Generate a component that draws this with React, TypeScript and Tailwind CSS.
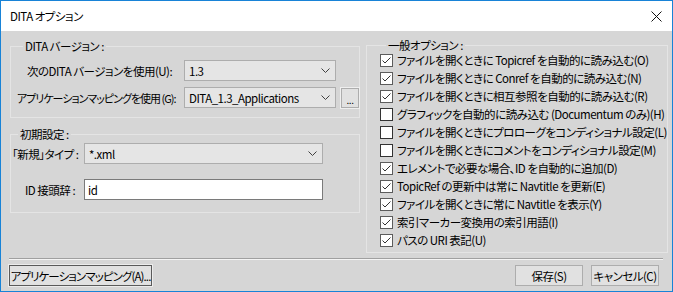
const FONT = "font-['Noto_Sans_CJK_JP','Noto_Sans',sans-serif] [font-feature-settings:'palt']";

const OPTIONS = [
  { label: "ファイルを開くときに Topicref を自動的に読み込む(O)", checked: true },
  { label: "ファイルを開くときに Conref を自動的に読み込む(N)", checked: true },
  { label: "ファイルを開くときに相互参照を自動的に読み込む(R)", checked: true },
  { label: "グラフィックを自動的に読み込む (Documentum のみ)(H)", checked: false },
  { label: "ファイルを開くときにプロローグをコンディショナル設定(L)", checked: false },
  { label: "ファイルを開くときにコメントをコンディショナル設定(M)", checked: false },
  { label: "エレメントで必要な場合、ID を自動的に追加(D)", checked: true },
  { label: "TopicRef の更新中は常に Navtitle を更新(E)", checked: true },
  { label: "ファイルを開くときに常に Navtitle を表示(Y)", checked: true },
  { label: "索引マーカー変換用の索引用語(I)", checked: true },
  { label: "パスの URI 表記(U)", checked: true },
];

function Chevron() {
  return (
    <svg width="9" height="5" viewBox="0 0 9 5" className="shrink-0">
      <polyline points="0.5,0.5 4.5,4.5 8.5,0.5" fill="none" stroke="#404040" strokeWidth="1" />
    </svg>
  );
}

function Combo({ value, width }: { value: string; width: string }) {
  return (
    <div className={`flex items-center justify-between h-[21px] border border-[#adadad] bg-[#e5e5e5] pl-[4px] pr-[5px] ${width}`}>
      <span>{value}</span>
      <Chevron />
    </div>
  );
}

function CheckBox({ checked }: { checked: boolean }) {
  return (
    <div
      className={`w-[13px] h-[13px] shrink-0 bg-white border ${checked ? "border-[#5c5c5c]" : "border-[#333333]"}`}
    >
      {checked && (
        <svg width="11" height="11" viewBox="0 0 11 11">
          <polyline points="1.5,5.5 4,8 9.5,2.5" fill="none" stroke="#333333" strokeWidth="1" />
        </svg>
      )}
    </div>
  );
}

export default function App() {
  return (
    <div
      className={`w-[673px] h-[292px] flex flex-col border border-[#1883d7] bg-[#d6d6d6] text-[11.5px] leading-[16px] tracking-[-0.5px] text-black whitespace-nowrap ${FONT}`}
    >
      {/* Title bar */}
      <div className="h-[30px] shrink-0 bg-white flex items-center justify-between pl-[9px] pr-[9px]">
        <span>DITA オプション</span>
        <svg width="11" height="11" viewBox="0 0 11 11" className="mr-[1px]">
          <path d="M0.5 0.5 L10.5 10.5 M10.5 0.5 L0.5 10.5" stroke="#111" strokeWidth="1" />
        </svg>
      </div>

      <div className="flex-1 flex flex-col pl-[8px] pr-[9px] pt-[7px] pb-[5px]">
        <div className="flex gap-[6px] pl-[1px]">
          {/* Left column */}
          <div className="w-[353px] flex flex-col gap-[8px]">
            <fieldset className="h-[80px] border border-[#e4e4e4] pl-[6px]">
              <legend className="ml-[6px] px-[2px]">DITA バージョン :</legend>
              <div className="flex items-center mt-[6px]">
                <span className="w-[167px] pl-[10px]">次のDITA バージョンを使用(U):</span>
                <Combo value="1.3" width="w-[152px]" />
              </div>
              <div className="flex items-center mt-[6px]">
                <span className="w-[167px] text-[11px] tracking-[-1px]">アプリケーションマッピングを使用 (G):</span>
                <Combo value="DITA_1.3_Applications" width="w-[152px]" />
                <div className="ml-[5px] w-[18px] h-[20px] border border-[#adadad] bg-[#e1e1e1] ring-1 ring-[#efefef] flex items-end justify-center text-[10px] leading-[14px]">
                  ...
                </div>
              </div>
            </fieldset>

            <fieldset className="h-[87px] border border-[#e4e4e4] pl-[1px]">
              <legend className="ml-[6px] px-[2px]">初期設定 :</legend>
              <div className="flex items-center mt-[1px]">
                <span className="w-[72px]">「新規」タイプ :</span>
                <Combo value="*.xml" width="w-[239px]" />
              </div>
              <div className="flex items-center mt-[15px]">
                <span className="w-[72px] pl-[13px]">ID 接頭辞 :</span>
                <div className="w-[239px] h-[21px] border border-[#7a7a7a] bg-white pl-[3px] flex items-center">id</div>
              </div>
            </fieldset>
          </div>

          {/* Right column */}
          <fieldset className="flex-1 h-[215px] border border-[#e4e4e4] pl-[13px]">
            <legend className="ml-[6px] px-[2px] leading-[14px]">一般オプション :</legend>
            <div className="flex flex-col mt-[-1px]">
              {OPTIONS.map((o) => (
                <div key={o.label} className="h-[18px] flex items-center gap-[4px]">
                  <CheckBox checked={o.checked} />
                  <span>{o.label}</span>
                </div>
              ))}
            </div>
          </fieldset>
        </div>

        {/* Separator */}
        <div className="mt-[5px] h-[2px] border-t border-[#a0a0a0] border-b border-b-[#f4f4f4]" />

        {/* Buttons */}
        <div className="mt-[5px] flex items-center">
          <div className="w-[143px] h-[21px] border border-[#5a5a5a] ring-1 ring-[#ececec] bg-[#e1e1e1] flex items-center justify-center tracking-[-0.9px]">
            アプリケーションマッピング(A)...
          </div>
          <div className="flex-1" />
          <div className="w-[68px] h-[21px] border border-[#adadad] bg-[#e1e1e1] flex items-center justify-center">
            保存(S)
          </div>
          <div className="ml-[8px] mr-[4px] w-[68px] h-[21px] border border-[#adadad] bg-[#e1e1e1] flex items-center justify-center">
            キャンセル(C)
          </div>
        </div>
      </div>
    </div>
  );
}
